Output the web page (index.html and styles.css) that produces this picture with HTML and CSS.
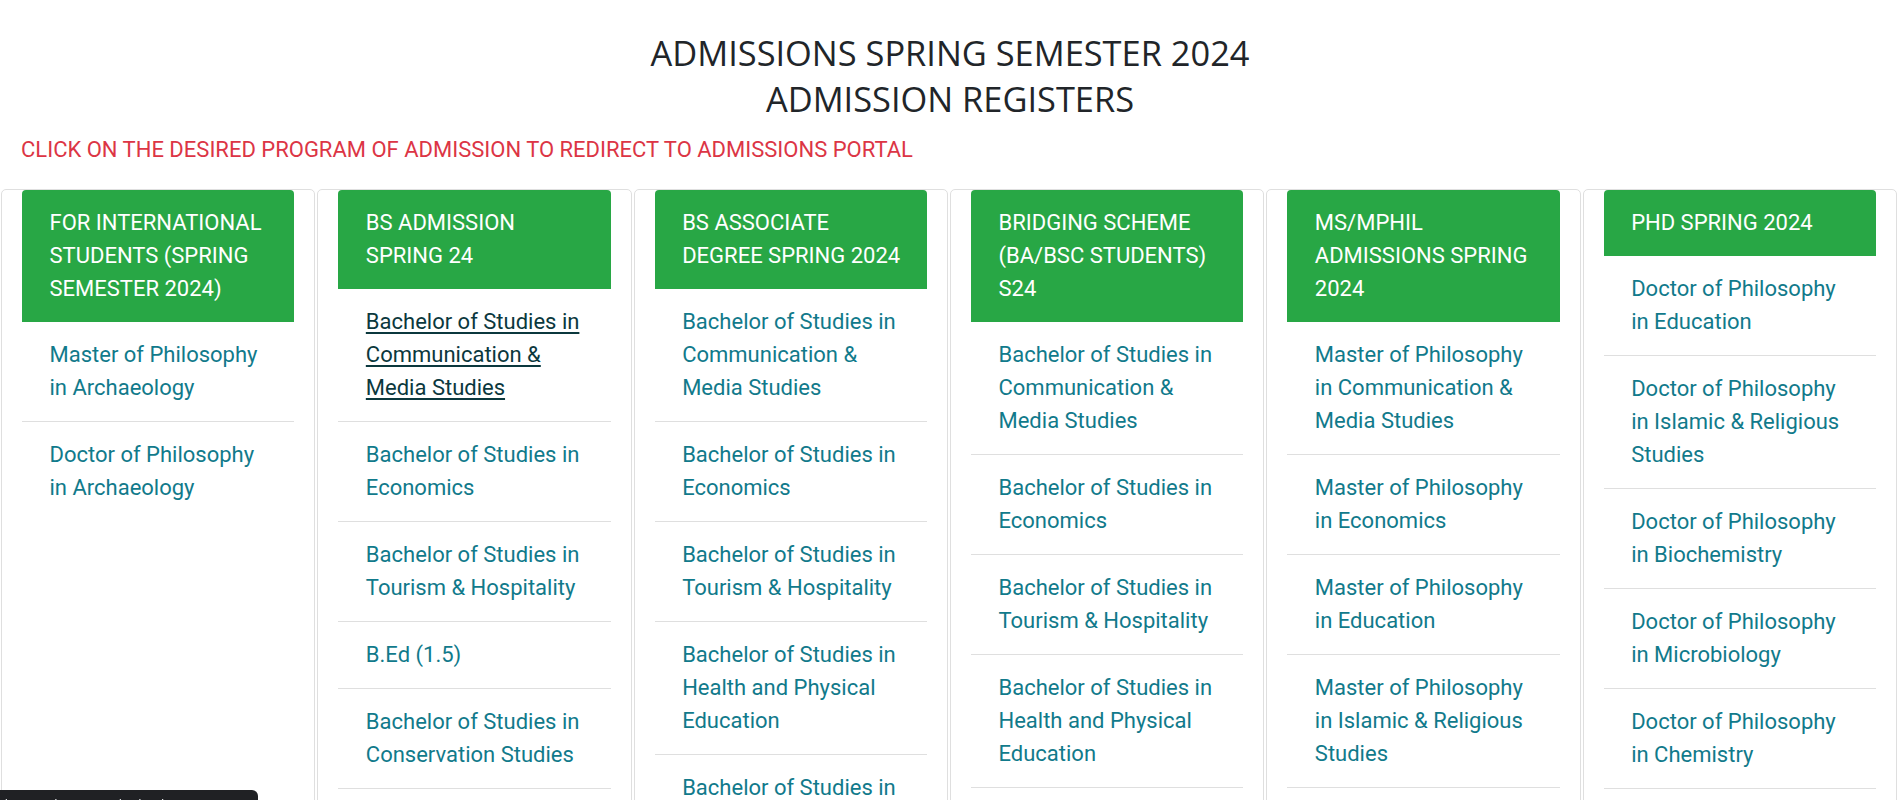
FILE: index.html
```html
<!DOCTYPE html>
<html lang="en">
<head>
<meta charset="utf-8">
<title>Admissions Spring Semester 2024</title>
<link rel="stylesheet" href="styles.css">
</head>
<body>
<main class="page">
  <h1 class="title">ADMISSIONS SPRING SEMESTER 2024<br>ADMISSION REGISTERS</h1>
  <p class="notice">CLICK ON THE DESIRED PROGRAM OF ADMISSION TO REDIRECT TO ADMISSIONS PORTAL</p>

  <div class="grid">
    <section class="card">
      <h2 class="card-header">FOR INTERNATIONAL<br>STUDENTS (SPRING<br>SEMESTER 2024)</h2>
      <ul class="list">
        <li><a href="#">Master of Philosophy<br>in Archaeology</a></li>
        <li><a href="#">Doctor of Philosophy<br>in Archaeology</a></li>
      </ul>
    </section>

    <section class="card">
      <h2 class="card-header">BS ADMISSION<br>SPRING 24</h2>
      <ul class="list">
        <li><a href="#" class="hover">Bachelor of Studies in<br>Communication &amp;<br>Media Studies</a></li>
        <li><a href="#">Bachelor of Studies in<br>Economics</a></li>
        <li><a href="#">Bachelor of Studies in<br>Tourism &amp; Hospitality</a></li>
        <li><a href="#">B.Ed (1.5)</a></li>
        <li><a href="#">Bachelor of Studies in<br>Conservation Studies</a></li>
        <li><a href="#">Bachelor of Studies in<br>Education</a></li>
      </ul>
    </section>

    <section class="card">
      <h2 class="card-header">BS ASSOCIATE<br>DEGREE SPRING 2024</h2>
      <ul class="list">
        <li><a href="#">Bachelor of Studies in<br>Communication &amp;<br>Media Studies</a></li>
        <li><a href="#">Bachelor of Studies in<br>Economics</a></li>
        <li><a href="#">Bachelor of Studies in<br>Tourism &amp; Hospitality</a></li>
        <li><a href="#">Bachelor of Studies in<br>Health and Physical<br>Education</a></li>
        <li><a href="#">Bachelor of Studies in<br>Conservation Studies</a></li>
      </ul>
    </section>

    <section class="card">
      <h2 class="card-header">BRIDGING SCHEME<br>(BA/BSC STUDENTS)<br>S24</h2>
      <ul class="list">
        <li><a href="#">Bachelor of Studies in<br>Communication &amp;<br>Media Studies</a></li>
        <li><a href="#">Bachelor of Studies in<br>Economics</a></li>
        <li><a href="#">Bachelor of Studies in<br>Tourism &amp; Hospitality</a></li>
        <li><a href="#">Bachelor of Studies in<br>Health and Physical<br>Education</a></li>
        <li><a href="#">Bachelor of Studies in<br>Conservation Studies</a></li>
      </ul>
    </section>

    <section class="card">
      <h2 class="card-header">MS/MPHIL<br>ADMISSIONS SPRING<br>2024</h2>
      <ul class="list">
        <li><a href="#">Master of Philosophy<br>in Communication &amp;<br>Media Studies</a></li>
        <li><a href="#">Master of Philosophy<br>in Economics</a></li>
        <li><a href="#">Master of Philosophy<br>in Education</a></li>
        <li><a href="#">Master of Philosophy<br>in Islamic &amp; Religious<br>Studies</a></li>
        <li><a href="#">Master of Philosophy<br>in Biochemistry</a></li>
      </ul>
    </section>

    <section class="card">
      <h2 class="card-header">PHD SPRING 2024</h2>
      <ul class="list">
        <li><a href="#">Doctor of Philosophy<br>in Education</a></li>
        <li><a href="#">Doctor of Philosophy<br>in Islamic &amp; Religious<br>Studies</a></li>
        <li><a href="#">Doctor of Philosophy<br>in Biochemistry</a></li>
        <li><a href="#">Doctor of Philosophy<br>in Microbiology</a></li>
        <li><a href="#">Doctor of Philosophy<br>in Chemistry</a></li>
        <li><a href="#">Doctor of Philosophy<br>in Physics</a></li>
      </ul>
    </section>
  </div>
</main>
<div class="status-bubble">https://admissions.edu.pk/Admission/Programs/BSCMS</div>
</body>
</html>
```

FILE: styles.css
```css
html, body {
  margin: 0;
  padding: 0;
  background: #ffffff;
}

body {
  font-family: Roboto, "Liberation Sans", sans-serif;
  color: #212529;
  overflow: hidden;
}

.page {
  padding-top: 30px;
}

.title {
  margin: 0;
  font-family: "Open Sans", "Liberation Sans", sans-serif;
  font-weight: 400;
  font-size: 34.4px;
  line-height: 46px;
  text-align: center;
  color: #212529;
}

.notice {
  margin: 12px 0 0;
  padding: 0 21px;
  font-size: 22px;
  line-height: 31.5px;
  color: #dc3545;
}

.grid {
  margin-top: 23px;
  padding: 0 3px 0 1px;
  display: grid;
  grid-template-columns: repeat(6, 1fr);
  gap: 2px;
  align-items: stretch;
}

.card {
  border: 1px solid #dfdfdf;
  border-radius: 5px;
  padding: 0 20px;
  min-height: 700px;
}

.card-header {
  margin: 0;
  background: #28a745;
  color: #ffffff;
  font-weight: 400;
  font-size: 22px;
  line-height: 33px;
  padding: 16.5px 20px 16.5px 27.5px;
  border-radius: 4px 4px 0 0;
  white-space: nowrap;
}

.list {
  list-style: none;
  margin: 0;
  padding: 0;
}

.list li {
  padding: 16.5px 20px 16.5px 27.5px;
  border-bottom: 1px solid #dfdfdf;
  font-size: 22px;
  line-height: 33px;
  white-space: nowrap;
}

.list li:last-child {
  border-bottom: 0;
}

.list a {
  color: #117a8b;
  text-decoration: none;
}

.list a.hover {
  color: #0b383d;
  text-decoration: underline;
  text-decoration-thickness: 1.5px;
  text-underline-offset: 3px;
}

.status-bubble {
  position: fixed;
  left: 0;
  top: 790px;
  width: 248px;
  height: 24px;
  padding: 7px 5px 0;
  background: #202124;
  color: #e8eaed;
  font-size: 12px;
  line-height: 16px;
  border-top-right-radius: 6px;
  overflow: hidden;
  white-space: nowrap;
}
```
